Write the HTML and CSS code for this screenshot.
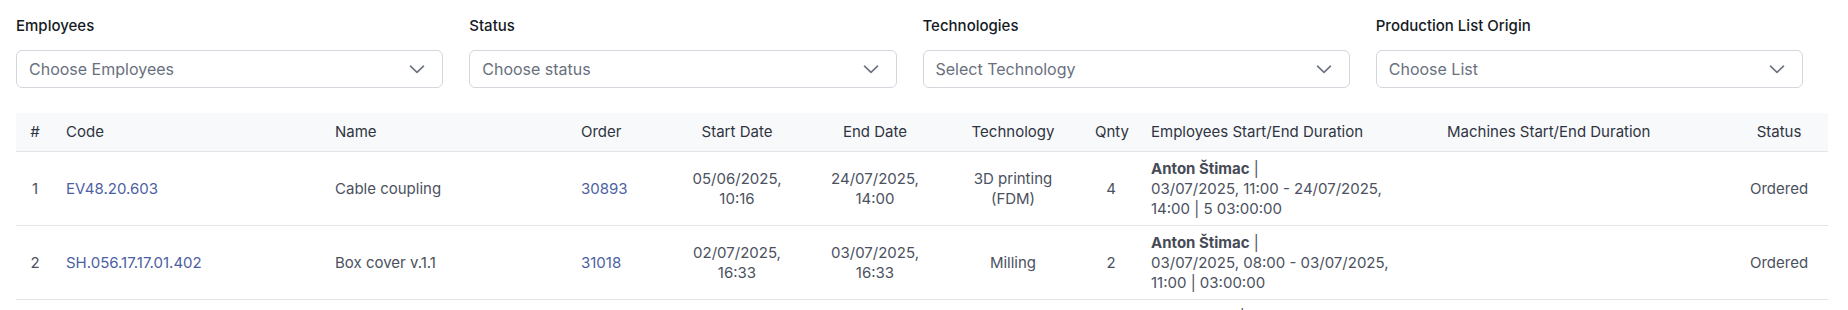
FILE: index.html
```html
<!DOCTYPE html>
<html lang="en">
<head>
    <meta charset="UTF-8">
    <meta name="viewport" content="width=device-width, initial-scale=1.0">
    <title>Production List</title>
    <link rel="stylesheet" href="styles.css">
</head>
<body>
    <div class="page">
        <div class="filters">
            <div class="filter">
                <label class="filter-label">Employees</label>
                <div class="select-box">
                    <span>Choose Employees</span>
                    <svg class="chevron" width="16" height="9" viewBox="0 0 16 9"><path d="M1.5 1.2L8 7.4l6.5-6.2"/></svg>
                </div>
            </div>
            <div class="filter">
                <label class="filter-label">Status</label>
                <div class="select-box">
                    <span>Choose status</span>
                    <svg class="chevron" width="16" height="9" viewBox="0 0 16 9"><path d="M1.5 1.2L8 7.4l6.5-6.2"/></svg>
                </div>
            </div>
            <div class="filter">
                <label class="filter-label">Technologies</label>
                <div class="select-box">
                    <span>Select Technology</span>
                    <svg class="chevron" width="16" height="9" viewBox="0 0 16 9"><path d="M1.5 1.2L8 7.4l6.5-6.2"/></svg>
                </div>
            </div>
            <div class="filter">
                <label class="filter-label">Production List Origin</label>
                <div class="select-box">
                    <span>Choose List</span>
                    <svg class="chevron" width="16" height="9" viewBox="0 0 16 9"><path d="M1.5 1.2L8 7.4l6.5-6.2"/></svg>
                </div>
            </div>
        </div>

        <table class="production-table">
            <colgroup>
                <col class="col-num">
                <col class="col-code">
                <col class="col-name">
                <col class="col-order">
                <col class="col-start">
                <col class="col-end">
                <col class="col-tech">
                <col class="col-qnty">
                <col class="col-emp">
                <col class="col-mach">
                <col class="col-status">
            </colgroup>
            <thead>
                <tr>
                    <th class="center">#</th>
                    <th>Code</th>
                    <th>Name</th>
                    <th>Order</th>
                    <th class="center">Start Date</th>
                    <th class="center">End Date</th>
                    <th class="center">Technology</th>
                    <th class="center">Qnty</th>
                    <th>Employees Start/End Duration</th>
                    <th>Machines Start/End Duration</th>
                    <th class="center">Status</th>
                </tr>
            </thead>
            <tbody>
                <tr>
                    <td class="center">1</td>
                    <td><a href="#">EV48.20.603</a></td>
                    <td>Cable coupling</td>
                    <td><a href="#">30893</a></td>
                    <td class="center">05/06/2025, 10:16</td>
                    <td class="center">24/07/2025, 14:00</td>
                    <td class="center">3D printing (FDM)</td>
                    <td class="center">4</td>
                    <td><strong>Anton Štimac</strong> |<br>03/07/2025, 11:00 - 24/07/2025, 14:00 | 5 03:00:00</td>
                    <td></td>
                    <td class="center">Ordered</td>
                </tr>
                <tr>
                    <td class="center">2</td>
                    <td><a href="#">SH.056.17.17.01.402</a></td>
                    <td>Box cover v.1.1</td>
                    <td><a href="#">31018</a></td>
                    <td class="center">02/07/2025, 16:33</td>
                    <td class="center">03/07/2025, 16:33</td>
                    <td class="center">Milling</td>
                    <td class="center">2</td>
                    <td><strong>Anton Štimac</strong> |<br>03/07/2025, 08:00 - 03/07/2025, 11:00 | 03:00:00</td>
                    <td></td>
                    <td class="center">Ordered</td>
                </tr>
                <tr>
                    <td class="center">3</td>
                    <td><a href="#">EV48.20.611</a></td>
                    <td>Mounting bracket</td>
                    <td><a href="#">31024</a></td>
                    <td class="center">03/07/2025, 09:12</td>
                    <td class="center">04/07/2025, 12:00</td>
                    <td class="center">Milling</td>
                    <td class="center">1</td>
                    <td><strong>Ivan Horvat</strong> |<br>04/07/2025, 08:00 - 04/07/2025, 12:00 | 04:00:00</td>
                    <td></td>
                    <td class="center">Ordered</td>
                </tr>
            </tbody>
        </table>
    </div>
</body>
</html>
```

FILE: styles.css
```css
body {
    margin: 0;
    background: #fff;
    font-family: Inter, "Noto Sans", sans-serif;
    color: #4b5160;
}

.page {
    padding: 15px 20px 0 16px;
}

.filters {
    display: grid;
    grid-template-columns: repeat(4, 1fr);
    column-gap: 26px;
    padding-right: 25px;
}

.filter-label {
    display: block;
    font-size: 15px;
    line-height: 22px;
    font-weight: 500;
    color: #151a24;
    margin-bottom: 13px;
}

.select-box {
    display: flex;
    align-items: center;
    justify-content: space-between;
    height: 38px;
    box-sizing: border-box;
    padding: 0 17px 0 12px;
    border: 1px solid #d3d6dc;
    border-radius: 6px;
    font-size: 16px;
    color: #69707d;
}

.chevron {
    fill: none;
    stroke: #6b7280;
    stroke-width: 1.6;
    stroke-linecap: round;
    stroke-linejoin: round;
}

.production-table {
    width: 100%;
    margin-top: 25px;
    border-collapse: collapse;
    table-layout: fixed;
    font-size: 15px;
    line-height: 20px;
}

.col-num { width: 38px; }
.col-code { width: 269px; }
.col-name { width: 246px; }
.col-order { width: 98px; }
.col-start { width: 140px; }
.col-end { width: 136px; }
.col-tech { width: 140px; }
.col-qnty { width: 56px; }
.col-emp { width: 296px; }
.col-mach { width: 295px; }
.col-status { width: 98px; }

.production-table th {
    background: #f8f9fb;
    padding: 9px 12px;
    text-align: left;
    font-weight: 400;
    color: #2f3441;
    white-space: nowrap;
    border-bottom: 1px solid #e3e5ea;
}

.production-table td {
    padding: 6.5px 12px;
    vertical-align: middle;
    border-bottom: 1px solid #e3e5ea;
}

.production-table .center {
    text-align: center;
}

.production-table a {
    color: #4c5fa3;
    text-decoration: none;
}

.production-table strong {
    font-weight: 700;
    color: #464b57;
}
```
